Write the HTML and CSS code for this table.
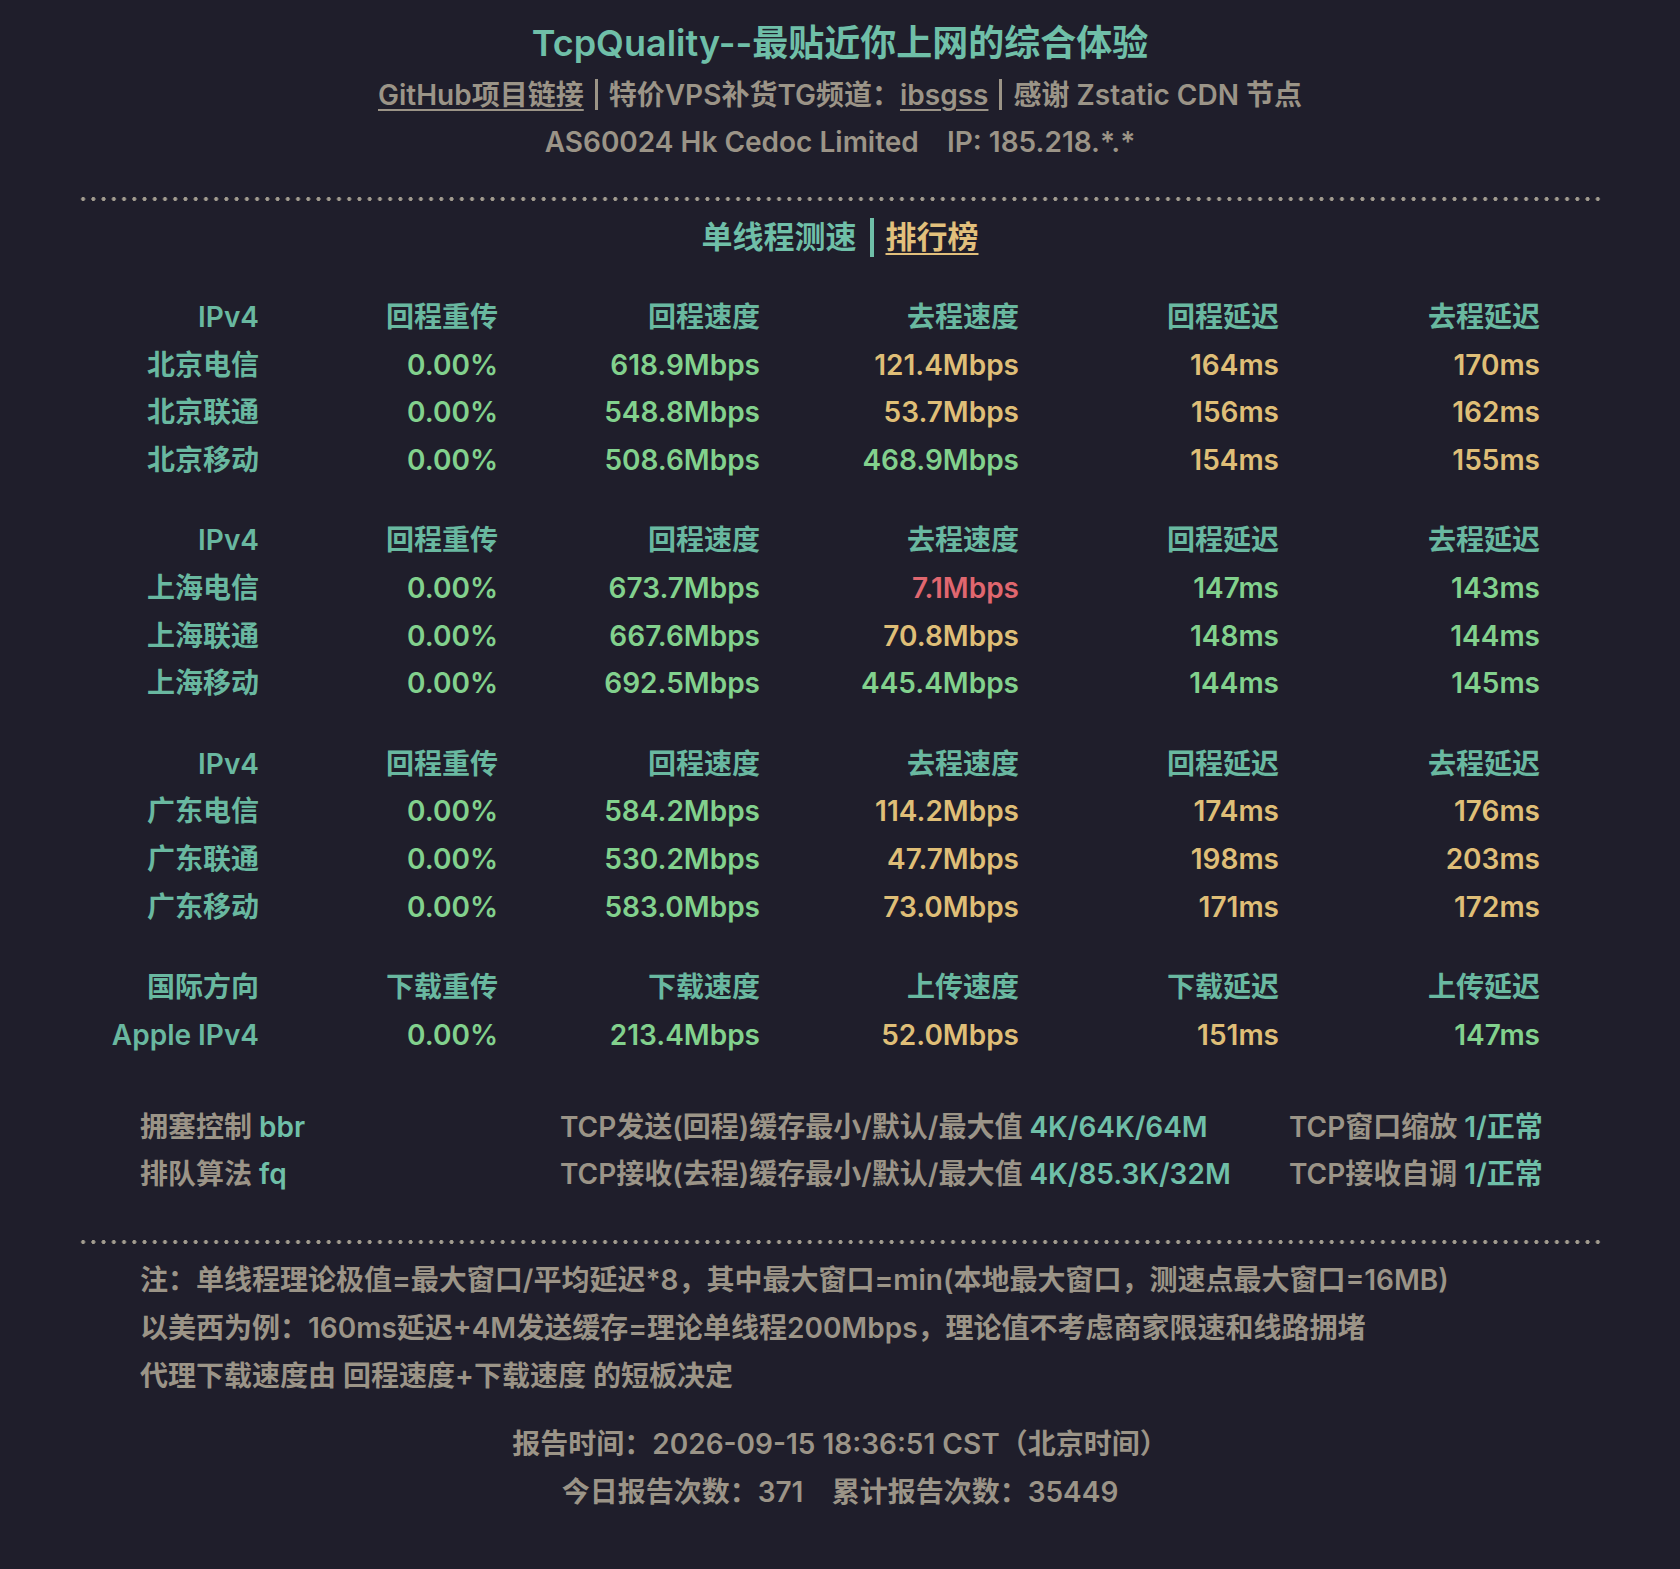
FILE: index.html
```html
<!DOCTYPE html>
<html lang="zh-CN">
<head>
<meta charset="utf-8">
<title>TcpQuality</title>
<link rel="stylesheet" href="styles.css">
</head>
<body>
<div class="page">
  <header class="head">
    <h1 class="title">TcpQuality--最贴近你上网的综合体验</h1>
    <p class="sub"><a class="lnk" href="#">GitHub项目链接</a><span class="bar"></span>特价VPS补货TG频道：<a class="lnk" href="#">ibsgss</a><span class="bar"></span>感谢 Zstatic CDN 节点</p>
    <p class="sub">AS60024 Hk Cedoc Limited&nbsp;&nbsp;&nbsp;&nbsp;IP: 185.218.*.*</p>
  </header>

  <div class="dots"></div>

  <nav class="tabs"><span class="tab">单线程测速</span><span class="tbar"></span><a class="tab-link" href="#">排行榜</a></nav>

  <section class="tbl">
    <div class="grp">
      <div class="h">IPv4</div><div class="h">回程重传</div><div class="h">回程速度</div><div class="h">去程速度</div><div class="h">回程延迟</div><div class="h">去程延迟</div>
      <div class="h">北京电信</div><div class="g">0.00%</div><div class="g">618.9Mbps</div><div class="y">121.4Mbps</div><div class="y">164ms</div><div class="y">170ms</div>
      <div class="h">北京联通</div><div class="g">0.00%</div><div class="g">548.8Mbps</div><div class="y">53.7Mbps</div><div class="y">156ms</div><div class="y">162ms</div>
      <div class="h">北京移动</div><div class="g">0.00%</div><div class="g">508.6Mbps</div><div class="g">468.9Mbps</div><div class="y">154ms</div><div class="y">155ms</div>
    </div>
    <div class="grp">
      <div class="h">IPv4</div><div class="h">回程重传</div><div class="h">回程速度</div><div class="h">去程速度</div><div class="h">回程延迟</div><div class="h">去程延迟</div>
      <div class="h">上海电信</div><div class="g">0.00%</div><div class="g">673.7Mbps</div><div class="r">7.1Mbps</div><div class="g">147ms</div><div class="g">143ms</div>
      <div class="h">上海联通</div><div class="g">0.00%</div><div class="g">667.6Mbps</div><div class="y">70.8Mbps</div><div class="g">148ms</div><div class="g">144ms</div>
      <div class="h">上海移动</div><div class="g">0.00%</div><div class="g">692.5Mbps</div><div class="g">445.4Mbps</div><div class="g">144ms</div><div class="g">145ms</div>
    </div>
    <div class="grp">
      <div class="h">IPv4</div><div class="h">回程重传</div><div class="h">回程速度</div><div class="h">去程速度</div><div class="h">回程延迟</div><div class="h">去程延迟</div>
      <div class="h">广东电信</div><div class="g">0.00%</div><div class="g">584.2Mbps</div><div class="y">114.2Mbps</div><div class="y">174ms</div><div class="y">176ms</div>
      <div class="h">广东联通</div><div class="g">0.00%</div><div class="g">530.2Mbps</div><div class="y">47.7Mbps</div><div class="y">198ms</div><div class="y">203ms</div>
      <div class="h">广东移动</div><div class="g">0.00%</div><div class="g">583.0Mbps</div><div class="y">73.0Mbps</div><div class="y">171ms</div><div class="y">172ms</div>
    </div>
    <div class="grp">
      <div class="h">国际方向</div><div class="h">下载重传</div><div class="h">下载速度</div><div class="h">上传速度</div><div class="h">下载延迟</div><div class="h">上传延迟</div>
      <div class="h">Apple IPv4</div><div class="g">0.00%</div><div class="g">213.4Mbps</div><div class="y">52.0Mbps</div><div class="y">151ms</div><div class="g">147ms</div>
    </div>
  </section>

  <section class="tcp">
    <div>拥塞控制 <span class="v">bbr</span></div>
    <div>TCP发送(回程)缓存最小/默认/最大值 <span class="v">4K/64K/64M</span></div>
    <div>TCP窗口缩放 <span class="v">1/正常</span></div>
    <div>排队算法 <span class="v">fq</span></div>
    <div>TCP接收(去程)缓存最小/默认/最大值 <span class="v">4K/85.3K/32M</span></div>
    <div>TCP接收自调 <span class="v">1/正常</span></div>
  </section>

  <div class="dots dots2"></div>

  <section class="notes">
    <p>注：单线程理论极值=最大窗口/平均延迟*8，其中最大窗口=min(本地最大窗口，测速点最大窗口=16MB)</p>
    <p>以美西为例：160ms延迟+4M发送缓存=理论单线程200Mbps，理论值不考虑商家限速和线路拥堵</p>
    <p>代理下载速度由 回程速度+下载速度 的短板决定</p>
  </section>

  <footer class="foot">
    <p>报告时间：2026-09-15 18:36:51 CST（北京时间）</p>
    <p>今日报告次数：371&nbsp;&nbsp;&nbsp;&nbsp;累计报告次数：35449</p>
  </footer>
</div>
</body>
</html>
```

FILE: styles.css
```css
html, body {
  margin: 0;
  padding: 0;
  background: #1f1e2b;
}

body {
  font-family: "Inter", "Noto Sans CJK SC", sans-serif;
  font-weight: 600;
  color: #9b9487;
  font-size: 28px;
}

.page {
  width: 1680px;
  min-height: 1569px;
  box-sizing: border-box;
  padding: 14px 78px 0;
}

.head {
  text-align: center;
}

.title {
  margin: 0;
  font-size: 36px;
  line-height: 58px;
  font-weight: 600;
  color: #6fbfa8;
}

.sub {
  margin: 0;
  font-size: 28px;
  line-height: 46px;
}

.sub + .sub {
  margin-top: 1px;
}

.lnk {
  color: #9b9487;
  text-decoration: underline;
  text-decoration-thickness: 2px;
  text-underline-offset: 4px;
}

.bar {
  display: inline-block;
  width: 3px;
  height: 31px;
  background: #9b9487;
  margin: 0 11px;
  vertical-align: -5px;
}

.dots {
  height: 4px;
  margin-top: 32px;
  background-image: radial-gradient(circle at center, #a39d90 1.7px, rgba(0,0,0,0) 2.3px);
  background-size: 10.24px 4px;
  background-repeat: repeat-x;
}

.tabs {
  margin-top: 12px;
  text-align: center;
  font-size: 31px;
  line-height: 48px;
}

.tab {
  color: #6fbfa8;
}

.tbar {
  display: inline-block;
  width: 4px;
  height: 39px;
  background: #6fbfa8;
  margin: 0 12px 0 13px;
  vertical-align: -9px;
}

.tab-link {
  color: #e2c07c;
  text-decoration: underline;
  text-decoration-thickness: 2px;
  text-underline-offset: 5px;
}

.tbl {
  margin-top: 33px;
  margin-left: 2px;
  width: 1460px;
}

.grp {
  display: grid;
  grid-template-columns: 179px 239px 262px 259px 260px 261px;
  line-height: 47.6px;
  text-align: right;
  margin-bottom: 33px;
}

.grp:last-child {
  margin-bottom: 0;
}

.h { color: #69b8a0; }
.g { color: #82d18d; }
.y { color: #dfbe77; }
.r { color: #e0676f; }

.tcp {
  margin-top: 45px;
  padding-left: 62px;
  display: grid;
  grid-template-columns: 420px 729px auto;
  line-height: 47px;
  white-space: nowrap;
}

.tcp .v {
  color: #6fbfa8;
}

.dots2 {
  margin-top: 42px;
}

.notes {
  margin-top: 12px;
  padding-left: 62px;
}

.notes p {
  margin: 0;
  line-height: 48px;
}

.foot {
  margin-top: 20px;
  text-align: center;
}

.foot p {
  margin: 0;
  line-height: 48px;
}
```
